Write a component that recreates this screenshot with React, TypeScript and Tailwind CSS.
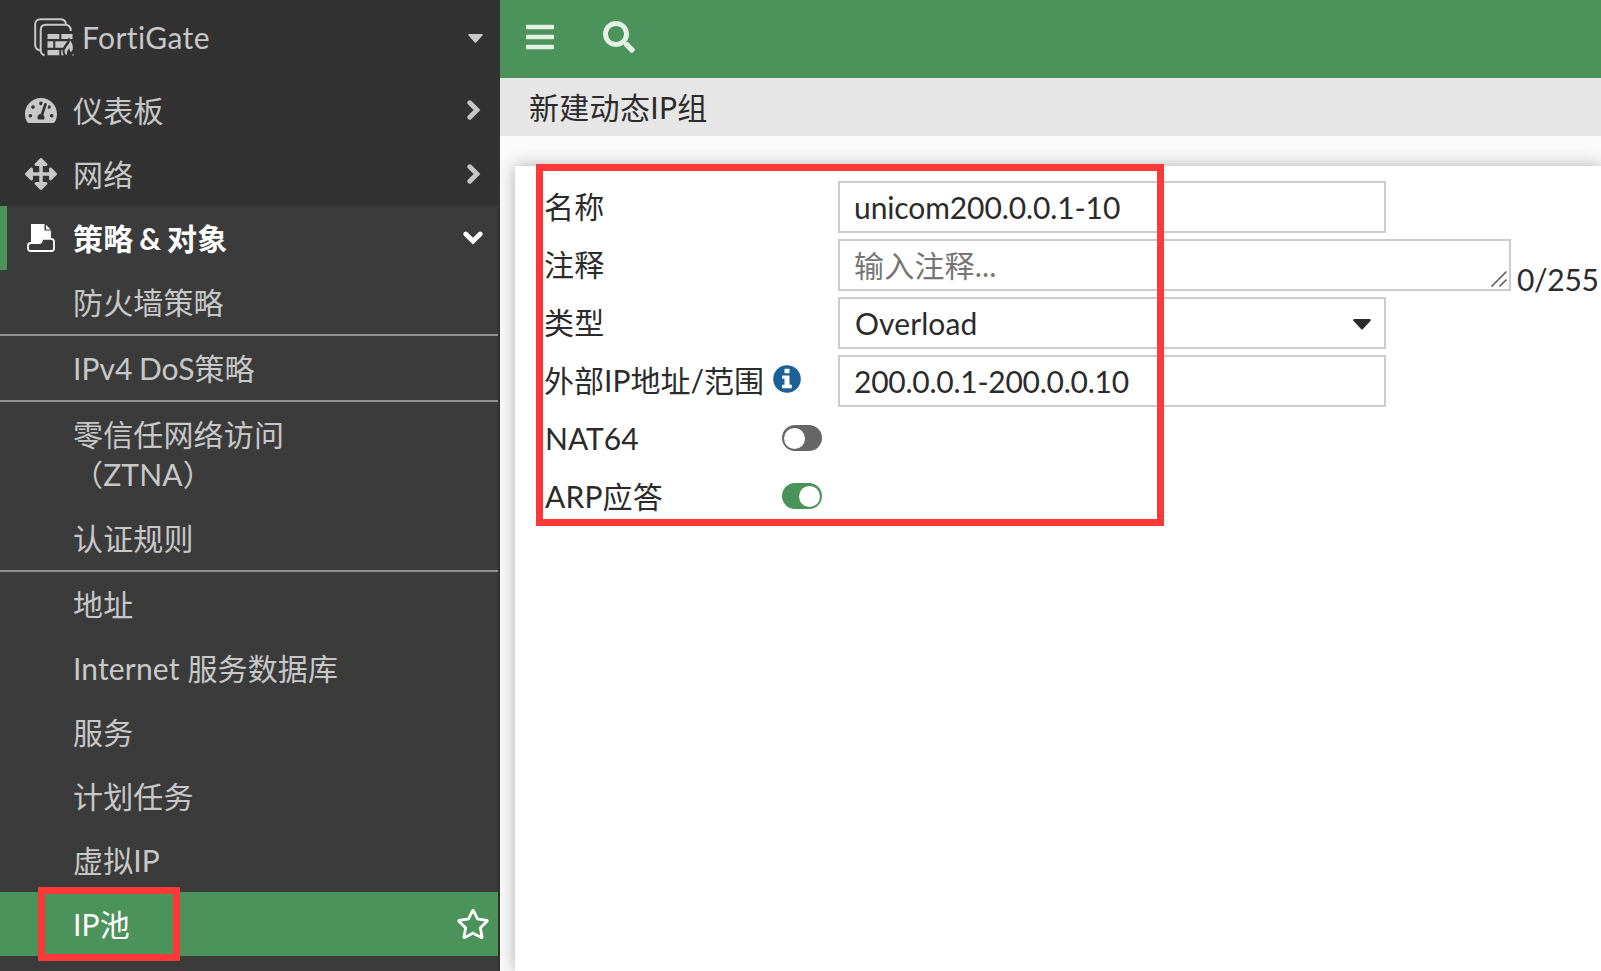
import React from 'react';
import { FaArrowsAlt, FaBars, FaRegStar, FaSearch, FaTachometerAlt } from 'react-icons/fa';

interface SubItem {
  label: string;
  divider?: boolean;
  active?: boolean;
}

const subItems: SubItem[] = [
  { label: '防火墙策略', divider: true },
  { label: 'IPv4 DoS策略', divider: true },
  { label: '零信任网络访问（ZTNA）' },
  { label: '认证规则', divider: true },
  { label: '地址' },
  { label: 'Internet 服务数据库' },
  { label: '服务' },
  { label: '计划任务' },
  { label: '虚拟IP' },
  { label: 'IP池', active: true }
];

const FortiGateIcon = () => (
  <svg className="-mt-0.5 ml-0.5 w-10 h-10 shrink-0" viewBox="0 0 40 40" fill="none">
    <path d="M6.5 32.6C3.4 32 1.2 30.2 1.2 27V6.5C1.2 3.2 3.2 1.2 6.500 1.200H26C29.500 1.200 31.500 2.800 32 5.800" stroke="#c8c8c8" strokeWidth="2" />
    <path d="M10.500 37.500C8 36.500 6.700 35 6.700 32V12C6.700 8.800 8.700 6.800 12 6.800H31C34.500 6.800 36.800 8.800 36.900 13" stroke="#c8c8c8" strokeWidth="2" />
    <path d="M13.500 16H25.300V21H13.500zM27.300 16H38.500V21H27.300zM13.500 23.200H19.300V29.800H13.500zM21.300 23.200H38V29.800H21.300zM13.500 32H25.300V37.200H13.500zM27.300 32H38V37.200H27.300z" fill="#c8c8c8" />
    <path d="M34.600 19.500C34.800 24 28.600 27 28.600 33C28.600 35.500 29.500 37 30.500 38.500H40V22.500H37.500z" fill="#323232" />
    <path d="M35.800 22.200C36.100 24.600 34.700 25.900 33.300 27.800C31.800 29.900 30.500 31.500 30.500 33.600C30.500 35.400 31.500 36.700 33.300 37.300C32.400 34.800 33 32.600 35.200 30.300C35.300 31.900 36 32.800 37 34.100C38.700 32.700 39.100 30.600 38.800 28.500C38.500 26.200 37.800 23.900 35.800 22.200z" fill="#c8c8c8" />
    <path d="M38.300 36.200H39.600V37.400H38.300z" fill="#c8c8c8" />
  </svg>
);

const ObjectsIcon = () => (
  <svg className="w-7 h-7" viewBox="0 0 28 28" fill="none">
    <path d="M4 0H17.5V6.5H24V16L21 14H16.5C15.5 14 15 15 14.8 16.5C14.5 18.3 13.5 19 12 19H4z" fill="#fff" />
    <path d="M19 0.8L23.6 5.5H19z" fill="#fff" />
    <path d="M4 19H12C13.5 19 14.5 18.3 14.8 16.5C15 15 15.5 14.8 17 14.8H24C26 14.8 27 16 27 17.5V24.5C27 26.2 26 27 24.5 27H3.5C2 27 1 26.2 1 24.5V21.5C1 20 2 19 4 19z" stroke="#fff" strokeWidth="1.8" fill="#3b3b3b" />
  </svg>
);

const ChevronRight = () => (
  <svg className="mr-[-1px] w-[14px] h-5" viewBox="0 0 14 20" fill="none">
    <path d="M2.800 2.800L10 10L2.800 17.200" stroke="#c8c8c8" strokeWidth="4.800" strokeLinecap="round" />
  </svg>
);

const ChevronDown = () => (
  <svg className="w-5 h-[14px]" viewBox="0 0 20 14" fill="none">
    <path d="M2.800 3L10 10.200L17.200 3" stroke="#fff" strokeWidth="4.800" strokeLinecap="round" />
  </svg>
);

const InfoIcon = () => (
  <svg className="ml-[9px] mb-1 w-7 h-7" viewBox="0 0 28 28">
    <circle cx="14" cy="14" r="13.800" fill="#1b6195" />
    <path d="M11.500 3.800H16.500V8.200H11.500zM9.200 10.500H16.500V19.800H18.800V23.200H9.200V19.800H11.500V13.800H9.200z" fill="#fff" />
  </svg>
);

const Switch = ({ on = false }: { on?: boolean }) => (
  <button
    className={
      on
        ? 'flex w-10 h-[26px] items-center justify-end rounded-full bg-[#4b935a] p-0.5'
        : 'flex w-10 h-[26px] items-center justify-start rounded-full bg-[#666666] p-0.5'
    }
  >
    <span className="w-[21px] h-[21px] rounded-full bg-white" />
  </button>
);

const Sidebar = () => (
  <aside className="flex w-[500px] h-full shrink-0 flex-col bg-[#323232] tracking-[0.15px] text-[#c8c8c8]">
    <div className="flex h-[78px] shrink-0 items-center pl-8 pr-[17px]">
      <FortiGateIcon />
      <span className="-mt-1 ml-2 flex-1 leading-[74px] tracking-[0.4px]">FortiGate</span>
      <svg className="-mt-0.5 w-[15px] h-[9px]" viewBox="0 0 15 9">
        <path d="M1 0H14Q15.2 0.5 14.4 1.6L8.5 8.2Q7.5 9.2 6.5 8.2L0.6 1.6Q-0.2 0.5 1 0z" fill="#c8c8c8" />
      </svg>
    </div>
    <div className="flex h-16 shrink-0 items-center pl-[25px] pr-5">
      <FaTachometerAlt className="w-8 h-[29px]" />
      <span className="ml-4 flex-1 leading-[64px] tracking-[0.3px]">仪表板</span>
      <ChevronRight />
    </div>
    <div className="flex h-16 shrink-0 items-center pl-[25px] pr-5">
      <FaArrowsAlt className="w-8 h-8" />
      <span className="ml-4 flex-1 leading-[64px] tracking-[0.3px]">网络</span>
      <ChevronRight />
    </div>
    <div className="mr-0.5 flex-1 bg-[#3b3b3b]">
      <div className="flex h-16 items-center border-l-[7px] border-[#4b935a] pl-5 pr-[15px] font-bold text-white">
        <ObjectsIcon />
        <span className="ml-[18px] flex-1 leading-[64px] [word-spacing:-1.5px]">策略 &amp; 对象</span>
        <ChevronDown />
      </div>
      {subItems.map((item) => (
        <div
          key={item.label}
          className={`relative flex items-center justify-between py-3 pl-[73px] pr-2 leading-10 ${
            item.active ? 'bg-[#4b935a] text-white' : ''
          } ${item.divider ? 'border-b-2 border-[#919191]' : ''}`}
        >
          <span className={item.label.startsWith('IPv4') ? 'tracking-normal [word-spacing:-1px]' : ''}>
            {item.label.startsWith('零') ? (
              <>
                零信任网络访问
                <br />
                （ZTNA）
              </>
            ) : (
              item.label
            )}
          </span>
          {item.active && <FaRegStar className="w-[34px] h-[30px]" />}
          {item.active && (
            <div className="absolute -top-[5px] left-[38px] w-[142px] h-[74px] border-[7px] border-[#fc3838]" />
          )}
        </div>
      ))}
    </div>
  </aside>
);

const PoolForm = () => (
  <div className="relative ml-[15px] mt-[30px] flex-1 bg-white pl-[30px] pt-[15px] shadow-[0_0_16px_rgba(0,0,0,0.3)]">
    <div className="flex flex-col gap-1.5 leading-[52px]">
      <div className="flex h-[52px]">
        <label className="-ml-px w-[294px] leading-[50px] tracking-[0.3px]">名称</label>
        <input
          className="w-[548px] border-2 border-[#cccccc] px-[14px] tracking-[-0.1px]"
          defaultValue="unicom200.0.0.1-10"
        />
      </div>
      <div className="flex h-[52px]">
        <label className="-ml-px w-[294px] leading-[50px] tracking-[0.3px]">注释</label>
        <div className="relative w-[673px] h-[52px]">
          <textarea
            className="block w-full h-full resize-none overflow-hidden border-2 border-[#cccccc] px-[14px] leading-[48px] tracking-[0.2px] placeholder:text-[#757575]"
            placeholder="输入注释..."
          />
          <svg className="absolute right-1 bottom-1 w-4 h-4" viewBox="0 0 16 16">
            <path d="M0.5 15.5L15.5 0.5M8.5 15.5L15.5 8.5" stroke="#555" strokeWidth="1.5" />
          </svg>
        </div>
        <span className="ml-[6px] mt-[14px] tracking-[-0.3px]">0/255</span>
      </div>
      <div className="flex h-[52px]">
        <label className="-ml-px w-[294px] leading-[50px] tracking-[0.3px]">类型</label>
        <div className="flex w-[548px] items-center justify-between border-2 border-[#cccccc] pl-[15px] pr-[13px]">
          <span className="tracking-[0.1px]">Overload</span>
          <svg className="mt-0.5 w-[18px] h-[11px]" viewBox="0 0 18 11">
            <path d="M1 0H17Q18.4 0.6 17.4 1.9L10 10Q9 11 8 10L0.6 1.9Q-0.4 0.6 1 0z" fill="#2b2b2b" />
          </svg>
        </div>
      </div>
      <div className="flex h-[52px]">
        <label className="-ml-px flex w-[294px] items-center leading-[50px]">
          <span className="-mt-0.5">外部IP地址/范围</span>
          <InfoIcon />
        </label>
        <input
          className="w-[548px] border-2 border-[#cccccc] px-[14px] tracking-[-0.25px]"
          defaultValue="200.0.0.1-200.0.0.10"
        />
      </div>
      <div className="flex h-[52px]">
        <label className="w-[237px] leading-[50px]">NAT64</label>
        <div className="pt-3 leading-none">
          <Switch />
        </div>
      </div>
      <div className="flex h-[52px]">
        <label className="w-[237px] leading-[50px] tracking-[0.15px]">ARP应答</label>
        <div className="pt-3 leading-none">
          <Switch on />
        </div>
      </div>
    </div>
    <div className="pointer-events-none absolute -top-0.5 left-[21px] w-[628px] h-[362px] border-[7px] border-[#fc3838]" />
  </div>
);

const App: React.FC = () => {
  return (
    <div className="flex w-full h-screen overflow-hidden bg-[#fafafa] font-['Lato','Noto_Sans_CJK_SC',sans-serif] text-[30px] text-[#2b2b2b]">
      <Sidebar />
      <main className="flex flex-1 flex-col overflow-hidden">
        <header className="flex h-[78px] shrink-0 items-center gap-[49px] bg-[#4b935a] pl-[26px] pb-1 text-[#e4efe6]">
          <FaBars className="w-7 h-8" />
          <FaSearch className="w-8 h-8" />
        </header>
        <div className="h-[58px] shrink-0 bg-[#e6e6e6] pl-[29px] leading-[58px] tracking-[0.3px]">新建动态IP组</div>
        <PoolForm />
      </main>
    </div>
  );
};

export default App;
